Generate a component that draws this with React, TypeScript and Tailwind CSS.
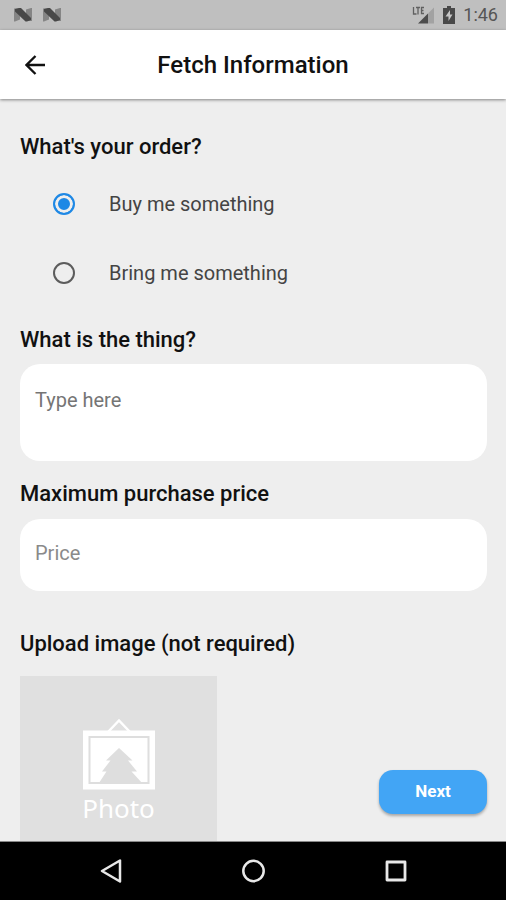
import { useState } from 'react';

function NougatIcon() {
  return (
    <svg width="19" height="16" viewBox="0 0 19 16" aria-hidden="true">
      <path d="M0 1.500h6v11L1 14.500H0z" fill="#858585" />
      <path d="M12 2.500l5-1.500h1v13h-6z" fill="#858585" />
      <path d="M1 2l4-1h2l10 10v2l-4 1.500h-1.500L1 4.500z" fill="#484848" />
    </svg>
  );
}

function StatusBar() {
  return (
    <div className="flex h-[30px] shrink-0 items-center justify-between bg-[#bfbfbf] pr-2 pl-3.5 text-[#555]">
      <div className="flex gap-2.5">
        <NougatIcon />
        <NougatIcon />
      </div>
      <div className="flex items-center">
        <svg width="24" height="20" viewBox="0 0 24 20" aria-hidden="true">
          <path d="M2.500 2v7h3M5 2.500h4M7 2.500v7M13 2.500h-2.500v6H13M10.500 5.500h2" fill="none" stroke="#606060" strokeWidth="1.300" />
          <path d="M23 2.500v16H17V8.500z" fill="#a2a2a2" />
          <path d="M17 8.500v10H7z" fill="#4c4c4c" />
        </svg>
        <svg className="ml-2" width="12" height="18" viewBox="0 0 12 18" aria-hidden="true">
          <path d="M4 0h4v2h4v16H0V2h4z" fill="#494949" />
          <path d="M7 4L2.500 10.500H5.500V15L9.500 8.500H7z" fill="#c6c6c6" />
        </svg>
        <span className="ml-2 text-lg leading-8">1:46</span>
      </div>
    </div>
  );
}

function Header() {
  return (
    <header className="relative z-10 grid h-[69px] shrink-0 grid-cols-[70px_1fr_70px] items-center bg-white shadow-[0_1px_3px_rgba(0,0,0,0.45)]">
      <button type="button" aria-label="Back" className="flex h-full items-center justify-center">
        <svg width="20" height="20" viewBox="0 0 20 20" fill="none" stroke="#111" strokeWidth="2.300" aria-hidden="true">
          <path d="M20 10H2M10.500 1L1.500 10l9 9" />
        </svg>
      </button>
      <h1 className="text-center text-2xl leading-8 font-medium text-[#111]">Fetch Information</h1>
    </header>
  );
}

const orderTypes = [
  { value: 'buy', label: 'Buy me something' },
  { value: 'bring', label: 'Bring me something' },
];

function PhotoPlaceholder() {
  return (
    <button type="button" className="mt-5 flex h-[197px] w-[197px] flex-col items-center bg-[#e0e0e0] pt-[42px] text-white">
      <svg width="74" height="72" viewBox="0 0 74 72" aria-hidden="true">
        <path d="M26 14L37 2.500l11 11.500" fill="none" stroke="#fff" strokeWidth="2.500" />
        <path d="M1 12.500h72v59H1z" fill="#fff" />
        <path d="M7.500 19h59v46h-59z" fill="none" stroke="#dedede" strokeWidth="2" />
        <path d="M37 30L24 42.500h4.500L20 53.500h4.500L17 65h43L49.500 53.500H55L46 42.500h4.500z" fill="#dedede" />
      </svg>
      <span className="font-['Noto_Sans',sans-serif] text-[26px] leading-9">Photo</span>
    </button>
  );
}

function NavBar() {
  return (
    <nav className="flex h-[58px] shrink-0 items-center justify-center gap-[94px] bg-black">
      <button type="button" aria-label="Go back" className="flex w-12 justify-center">
        <svg width="24" height="24" viewBox="0 0 24 24" fill="none" stroke="#e8e8e8" strokeWidth="2.500" strokeLinejoin="round" aria-hidden="true">
          <path d="M21 1.500v21L3 12z" />
        </svg>
      </button>
      <button type="button" aria-label="Home" className="flex w-12 justify-center">
        <svg width="24" height="24" viewBox="0 0 24 24" fill="none" stroke="#e8e8e8" strokeWidth="2.500" aria-hidden="true">
          <circle cx="12.500" cy="12" r="10.200" />
        </svg>
      </button>
      <button type="button" aria-label="Recent apps" className="flex w-12 justify-center">
        <svg width="24" height="24" viewBox="0 0 24 24" fill="none" stroke="#e8e8e8" strokeWidth="2.800" strokeLinejoin="round" aria-hidden="true">
          <path d="M4 3h18v18H4z" />
        </svg>
      </button>
    </nav>
  );
}

export default function App() {
  const [orderType, setOrderType] = useState('buy');
  const [thing, setThing] = useState('');
  const [price, setPrice] = useState('');

  return (
    <div className="flex h-screen flex-col bg-[#eee] font-[Roboto,sans-serif]">
      <StatusBar />
      <Header />

      <main className="relative min-h-0 flex-1 overflow-hidden border-b border-[#888]">
        <form className="flex flex-col pt-9 pr-[19px] pl-5" onSubmit={e => e.preventDefault()}>
          <fieldset>
            <legend className="text-[22px] leading-6 font-medium text-[#111]">What's your order?</legend>
            <div className="mt-2.5">
              {orderTypes.map(type => (
                <label key={type.value} className="flex h-[69px] items-center gap-[34px] pl-[33px] text-xl text-[#444]">
                  <input
                    type="radio"
                    name="orderType"
                    value={type.value}
                    checked={orderType === type.value}
                    onChange={() => setOrderType(type.value)}
                    className="h-[22px] w-[22px] appearance-none rounded-full border-2 border-[#5c5c5c] checked:border-[#1e88e5] checked:bg-[#1e88e5] checked:shadow-[inset_0_0_0_3px_#eee]"
                  />
                  {type.label}
                </label>
              ))}
            </div>
          </fieldset>

          {/* Item description */}
          <label htmlFor="thing" className="mt-[21px] text-[22px] leading-6 font-medium text-[#111]">What is the thing?</label>
          <textarea
            id="thing"
            value={thing}
            onChange={e => setThing(e.target.value)}
            placeholder="Type here"
            className="mt-3 h-[97px] resize-none rounded-[20px] bg-white px-[15px] pt-6 text-xl leading-6 text-[#333] placeholder:text-[#757575]"
          />

          {/* Price limit */}
          <label htmlFor="price" className="mt-[21px] text-[22px] leading-6 font-medium text-[#111]">Maximum purchase price</label>
          <input
            id="price"
            type="text"
            inputMode="decimal"
            value={price}
            onChange={e => setPrice(e.target.value)}
            placeholder="Price"
            className="mt-[13px] h-18 rounded-[20px] bg-white px-[15px] pb-1 text-xl text-[#333] placeholder:text-[#8a8a8a]"
          />

          <h2 className="mt-[41px] text-[22px] leading-6 font-medium text-[#111]">Upload image (not required)</h2>
          <PhotoPlaceholder />
        </form>

        <button type="button" className="absolute right-[19px] bottom-[27px] h-11 w-[108px] rounded-[14px] bg-[#42a5f5] text-[17px] font-bold text-white shadow-[0_2px_3px_rgba(0,0,0,0.3)]">
          Next
        </button>
      </main>

      <NavBar />
    </div>
  );
}
